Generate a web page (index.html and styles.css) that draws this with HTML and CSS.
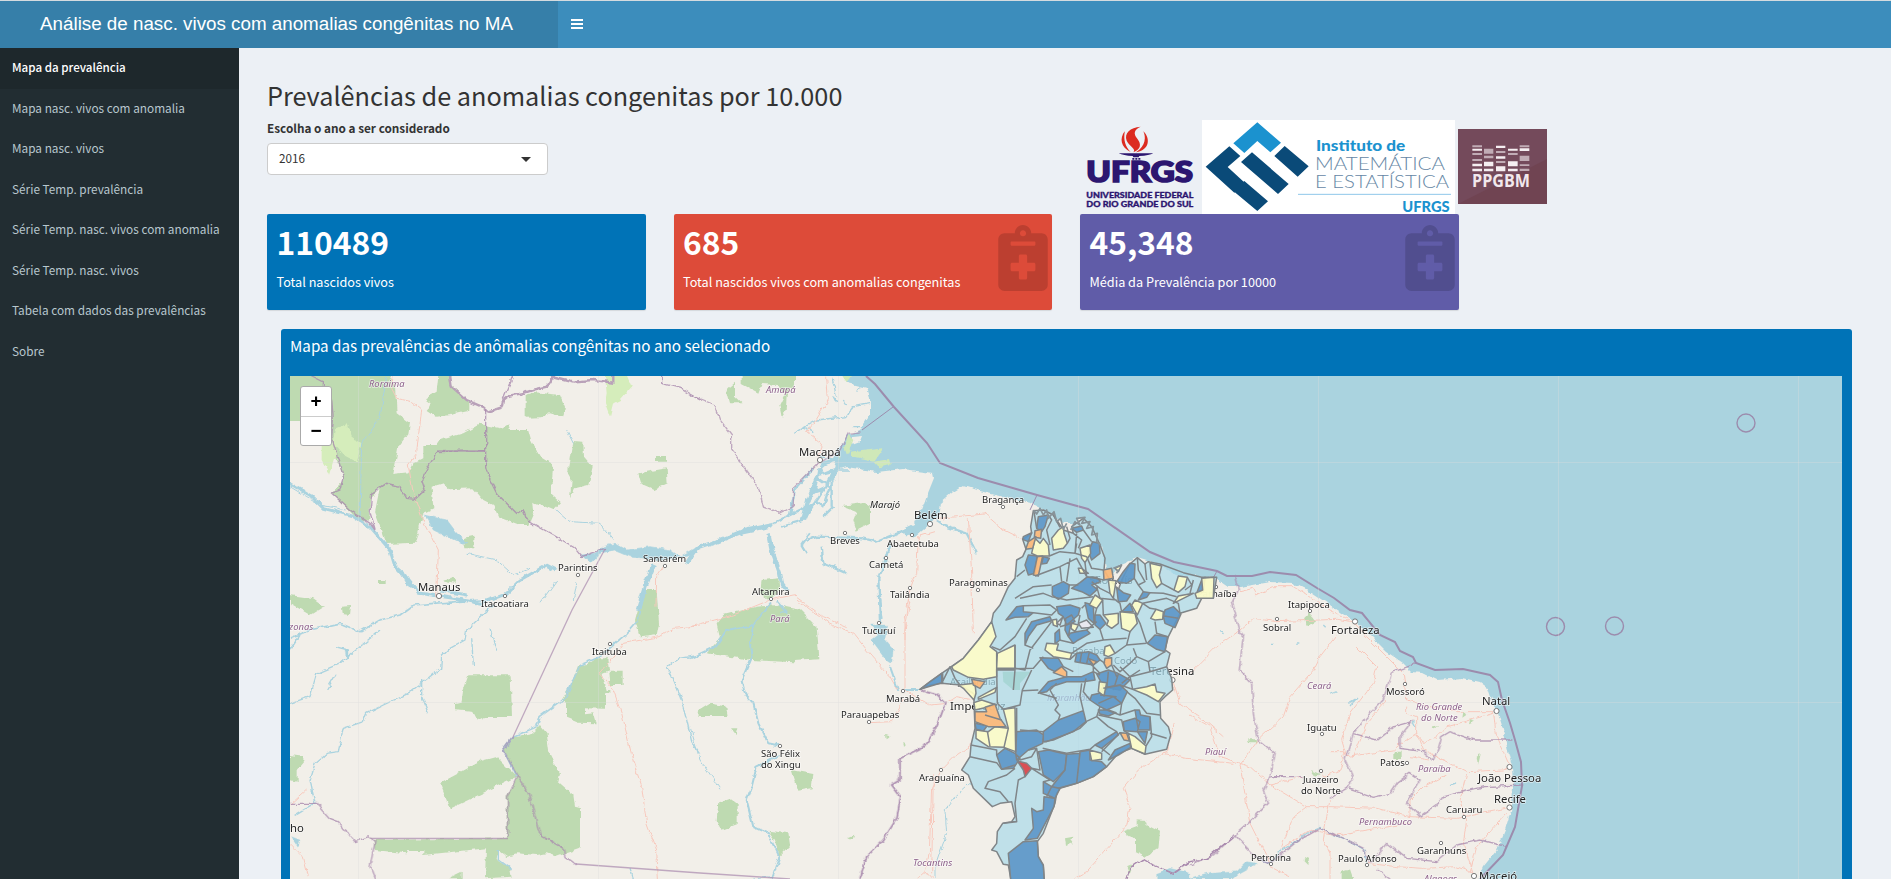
FILE: index.html
```html
<!DOCTYPE html>
<html lang="pt-BR">
<head>
<meta charset="utf-8">
<title>Análise de nasc. vivos com anomalias congênitas no MA</title>
<link rel="stylesheet" href="styles.css">
</head>
<body>
<header class="topbar">
  <div class="brand">Análise de nasc. vivos com anomalias congênitas no MA</div>
  <div class="toggle"><i></i><i></i><i></i></div>
</header>
<div class="shell">
  <nav class="sidebar">
    <a class="active">Mapa da prevalência</a>
    <a>Mapa nasc. vivos com anomalia</a>
    <a>Mapa nasc. vivos</a>
    <a>Série Temp. prevalência</a>
    <a>Série Temp. nasc. vivos com anomalia</a>
    <a>Série Temp. nasc. vivos</a>
    <a>Tabela com dados das prevalências</a>
    <a>Sobre</a>
  </nav>
  <main class="content">
    <h2>Prevalências de anomalias congenitas por 10.000</h2>
    <div class="grid controls">
      <div class="field">
        <label>Escolha o ano a ser considerado</label>
        <div class="select"><span>2016</span><b class="caret"></b></div>
      </div>
      <div></div>
      <div class="logos">
        <svg width="118" height="94" viewBox="0 0 354 282">
          <g fill="#dc2b20"><path d="M182 20C150 22 132 40 140 62C148 80 170 86 160 97C184 86 184 72 172 56C158 40 164 28 182 20Z"/><path d="M134 34C118 56 122 82 152 96C136 80 130 60 134 36Z"/><path d="M190 34C198 50 198 78 168 97C212 90 210 52 190 34Z"/></g>
          <path d="M116 100H220Q208 107 178 108L176 112H160L158 108Q130 107 116 100ZM157 114h6v5h-6zM166 114h6v5h-6zM175 114h6v5h-6z" fill="#2c1670"/>
          <g fill="#2c1670" stroke="#2c1670" class="ufrgs"><text x="19" y="186" font-size="84" stroke-width="5" textLength="320" lengthAdjust="spacingAndGlyphs">UFRGS</text><text x="19" y="235" font-size="25" stroke-width="1" textLength="321" lengthAdjust="spacingAndGlyphs">UNIVERSIDADE FEDERAL</text><text x="19" y="261" font-size="25" stroke-width="1" textLength="321" lengthAdjust="spacingAndGlyphs">DO RIO GRANDE DO SUL</text></g>
        </svg>
        <svg width="253" height="94" viewBox="0 0 759 282">
          <path fill="#fff" d="M0 0h759v282H0z"/>
          <path fill="#1b92cf" d="M166 7L237 68L205 97L166 63L127 99L94 70Z"/>
          <path fill="#0a4a78" d="M82 79L115 108L77 141L129 189L97 218L11 140ZM150 97L260 192L228 222L117 126ZM248 78L320 139L287 170L217 108ZM127 183L198 244L166 273L94 213Z"/>
          <g class="ime"><text class="heavy" x="342" y="92" font-size="46" textLength="268" lengthAdjust="spacingAndGlyphs">Instituto de</text><text x="339" y="149" font-size="55" textLength="390" lengthAdjust="spacingAndGlyphs">MATEMÁTICA</text><text x="339" y="204" font-size="55" textLength="402" lengthAdjust="spacingAndGlyphs">E ESTATÍSTICA</text><text class="heavy" x="601" y="275" font-size="47" textLength="142" lengthAdjust="spacingAndGlyphs">UFRGS</text></g>
          <path d="M288 223H747" stroke="#8ec7ea" stroke-width="3"/>
        </svg>
        <svg class="ppgbm" width="89" height="75" viewBox="0 0 267 225">
          <path fill="#744a5b" d="M0 0h267v225H0z"/><path fill="#704452" d="M0 225L267 90v135z"/>
          <g fill="#f5eef1"><path d="M43 59h29v6H43zM43 104h29v8H43zM43 119h29v8H43zM78 98h28v14H78zM78 119h28v8H78zM114 50h28v7h-28zM114 82h28v7h-28zM114 112h28v15h-28zM150 59h29v6h-29zM150 97h29v15h-29zM150 119h29v8h-29zM185 58h29v8h-29z"/><path opacity=".6" d="M43 49h29v6H43zM43 72h29v6H43zM43 90h29v6H43zM78 59h28v15H78zM78 80h28v8H78zM114 66h28v6h-28zM114 96h28v6h-28zM150 72h29v6h-29zM185 49h29v6h-29zM185 80h29v16h-29zM185 106h29v5h-29zM185 119h29v7h-29z"/></g>
          <text x="42" y="174" textLength="174" lengthAdjust="spacingAndGlyphs">PPGBM</text>
        </svg>
      </div>
    </div>
    <div class="grid">
      <section class="tile blue"><strong>110489</strong><p>Total nascidos vivos</p></section>
      <section class="tile red"><strong>685</strong><p>Total nascidos vivos com anomalias congenitas</p>
        <svg class="clip" viewBox="0 0 384 512"><path d="M336 64h-80c0-35-29-64-64-64s-64 29-64 64H48C22 64 0 86 0 112v352c0 26 22 48 48 48h288c27 0 48-22 48-48V112c0-26-21-48-48-48zM192 40c13 0 24 11 24 24s-11 24-24 24-24-11-24-24 11-24 24-24zm96 307c0 7-5 12-12 12h-52v52c0 7-5 12-12 12h-40c-7 0-12-5-12-12v-52h-52c-7 0-12-5-12-12v-42c0-7 5-12 12-12h52v-52c0-7 5-12 12-12h40c7 0 12 5 12 12v52h52c7 0 12 5 12 12zm0-193c0 3-3 6-6 6H102c-3 0-6-3-6-6v-20c0-3 3-6 6-6h180c3 0 6 3 6 6z"/></svg></section>
      <section class="tile purple"><strong>45,348</strong><p>Média da Prevalência por 10000</p>
        <svg class="clip" viewBox="0 0 384 512"><path d="M336 64h-80c0-35-29-64-64-64s-64 29-64 64H48C22 64 0 86 0 112v352c0 26 22 48 48 48h288c27 0 48-22 48-48V112c0-26-21-48-48-48zM192 40c13 0 24 11 24 24s-11 24-24 24-24-11-24-24 11-24 24-24zm96 307c0 7-5 12-12 12h-52v52c0 7-5 12-12 12h-40c-7 0-12-5-12-12v-52h-52c-7 0-12-5-12-12v-42c0-7 5-12 12-12h52v-52c0-7 5-12 12-12h40c7 0 12 5 12 12v52h52c7 0 12 5 12 12zm0-193c0 3-3 6-6 6H102c-3 0-6-3-6-6v-20c0-3 3-6 6-6h180c3 0 6 3 6 6z"/></svg></section>
    </div>
    <section class="mapbox">
      <h3>Mapa das prevalências de anômalias congênitas no ano selecionado</h3>
      <div class="map">
        <svg class="tiles" width="1552" height="503" viewBox="290 376 1552 503">
          <defs><filter id="rough" filterUnits="userSpaceOnUse" x="270" y="360" width="1600" height="540"><feTurbulence type="fractalNoise" baseFrequency=".13" numOctaves="3" seed="4"/><feDisplacementMap in="SourceGraphic" scale="5" xChannelSelector="R" yChannelSelector="G"/></filter></defs>
          <path fill="#aad3df" d="M290 376H1842V879H290z"/>
          <g filter="url(#rough)">
            <path fill="#f2efe9" d="M280 366H842L847 383L867 388L870 397L870 415L860 430L847 435L840 448L834 457L822 462L806 500L801 520L806 521L813 505L832 480L837 470L847 467L877 472L903 469L933 473L934 478L928 493L923 507L917 523L905 533L915 537L938 517L940 503L953 492L963 486L980 491L1003 497L1030 503L1050 513L1063 523L1073 523L1083 518L1092 527L1100 543L1105 562L1108 580L1120 565L1137 558L1160 565L1177 575L1215 578L1228 587L1240 587L1270 582L1293 583L1307 590L1333 607L1353 620L1372 637L1387 652L1403 663L1412 672L1423 673L1437 680L1463 678L1480 682L1488 688L1492 700L1497 710L1503 730L1507 747L1512 767L1513 787L1512 807L1505 830L1497 850L1483 867L1473 889H280z"/>
            <path fill="#f2efe9" d="M821 466L836 462L834 468L824 472zM818 476L831 473L826 485L815 490zM813 494L822 491L815 502L809 506zM852 437L862 436L860 441L852 444z"/>
            <g fill="#bedab1">
              <g transform="translate(280,320) scale(.33333)">
                <path d="M20 150H320L345 200L350 280L390 310L385 340L355 380L340 465L385 460L400 430L430 415L430 375L470 375L480 360L550 340L600 312L660 325L685 310L690 330L745 330L755 365L780 410L820 435L812 525L840 550L820 570L760 545L762 575L745 615L720 615L655 590L640 555L610 540L580 505L510 508L490 490L455 500L460 565L430 580L420 615L405 668L320 672L285 575L300 500L270 540L268 600L240 605L200 565L155 520L190 480L180 440L160 400L150 300L30 300z"/>
                <path d="M475 165H515L510 190L568 245V272L510 285L470 290L440 270L455 250L435 235L470 215zM737 225L765 217L840 225L855 260L850 292L810 280L783 292L737 293zM880 366L910 368L912 410L938 440L925 495L885 505L870 535L875 480L858 450L868 440zM1128 405h30v20h-30zM1075 460L1160 445L1163 490L1120 510L1085 495zM548 655l35-8v38h-30zM297 780h20v12h-20zM485 780L520 772L528 790zM30 825L100 835L135 860H60L30 850z"/>
                <path fill="#d5edbb" d="M975 165H1040L1055 200L1020 240L1000 250L990 290L975 250L980 220zM170 320L200 310L215 350L245 370L230 425L190 405L160 370zM125 375L160 370L170 400L150 465L125 420z"/>
              </g>
              <g transform="translate(280,590) scale(.33333)">
                <path d="M565 256H692L696 381H612L590 392L575 362L525 358V340L545 335L550 300zM895 225L925 222L950 205H985L990 240L965 250L980 300H988V310H975V356L915 355L915 370L940 367L950 400L895 398L858 383V335L845 330L870 290zM985 245h43v40h-40zM1090 0H1130L1137 100L1130 135L1080 142L1065 90zM700 440L755 430L780 405L800 430L808 490L840 555L835 575L880 615L885 650L903 655V775L830 800L800 790L770 795L710 790L680 798L655 780L650 810L690 835L695 860L615 865L618 775L430 795V780L385 780L380 790L285 780L280 750L680 745V620L710 560L670 480zM480 580L605 512L650 500L710 560L510 656zM30 495L70 500L70 515L50 540V575L30 570zM30 20L80 30L130 50L90 75L30 40zM183 50L213 48L210 75L185 72zM505 865L545 845V865z"/>
              </g>
              <g transform="translate(690,360) scale(.33333)">
                <path d="M155 45H315V80L295 85L290 150L275 172L268 135L285 100L265 75L215 72L205 98L155 72zM115 85L135 68L135 110L155 130H118L110 100zM455 438L515 430L543 440V490L500 512L490 480L500 455zM215 660L265 655L268 690L240 720L210 700z"/>
                <path d="M80 790L100 765L200 740L260 735L330 750L380 800L388 895L312 900V907L185 900L50 880L90 835z" />
                <path fill="#cfe8b8" d="M475 225L490 240L475 280L445 300L460 270zM480 275L580 262L550 305L480 290zM550 305L600 297L605 315L565 322zM455 45h30l-15 22z"/>
              </g>
              <g transform="translate(690,600) scale(.33333)">
                <path d="M25 330L60 308L105 315L110 348H22zM305 510L370 522L365 565L325 572zM85 610L120 598L143 615V672L95 690L80 660zM235 692L295 700L300 735L268 768L255 720zM120 385h22l-5 20zM640 425l10 8-8 8zM585 405l14 5-12 8zM475 712l18-8-5 14z"/>
              </g>
              <g transform="translate(900,660) scale(.33333)"><path d="M670 515L710 500V478L735 480L740 495L780 515L775 565L735 590L705 575V540zM495 535L520 530L515 550L498 558zM680 620l20-8-12 30z"/></g>
              <g transform="translate(1190,540) scale(.33333)"><path d="M345 235L360 220L378 245L350 258zM175 598h27v9h-27zM610 635h25v22h-25zM340 960l17-10-2 25zM455 995L480 988L490 1017H455zM360 690l30 12-15 8zM860 650l12-8-8 35zM820 515l12 8-15 10zM840 540l15 5-18 8zM720 560l30-5-20 10z"/></g>
            </g>
            <g fill="none" stroke="#aad3df" stroke-linejoin="round">
              <g transform="translate(280,320) scale(.33333)">
                <path stroke-width="9" d="M20 485L95 530L130 565L225 590L270 620L330 690L345 740L420 820L520 835L600 850L680 820L720 780L800 735L830 750M480 810L560 825"/>
                <path stroke-width="3" d="M30 500L120 555L200 570M320 170L300 290L245 370L240 600M560 700L650 720L700 765L750 745M860 330L880 370M830 570L870 605L960 610L1000 660M780 850L830 780M890 790L880 840"/>
                <path fill="#aad3df" stroke-width="2" d="M430 585L500 600L530 640L560 665L545 670L460 630L445 600zM345 735L375 760L415 815L380 795zM905 705L945 700L970 680L1005 670L1040 690L1110 680L1170 690L1200 710L1260 675L1250 700L1150 720L1060 715L1000 690L960 700L930 730z"/>
                <path stroke-width="15" d="M1120 735L1095 800L1075 870"/>
              </g>
              <g transform="translate(280,590) scale(.33333)">
                <path stroke-width="5" d="M30 145L90 120L180 100L240 125L300 90L360 75L400 45L460 40L600 30M30 180L60 135M1095 0L1075 90L1040 130L1000 165L950 205L900 225L855 325L780 380L770 410L700 440L670 480L710 560"/>
                <path stroke-width="4" d="M640 45L560 120L555 150L510 175L485 200L482 235L430 275L385 310L310 345L260 370L250 395L190 415L175 485L140 490L105 520L90 570L105 640L40 680M30 340L90 320L110 250L180 220L240 170L300 120M425 270L425 320L445 370M575 145L580 225M630 115L650 185M1260 195L1200 205L1160 230L1200 320L1220 390L1235 455L1260 490M655 780L655 810L695 840M165 170L205 180L200 210M170 250L140 300M1060 865L1050 835"/>
                <path fill="#aad3df" d="M35 740L60 750L55 770zM195 180h12v25h-8z"/>
              </g>
              <g transform="translate(690,360) scale(.33333)">
                <path stroke-width="13" d="M-10 610L20 565L80 545L155 515L250 495M235 520L245 570L270 640L275 670L290 690"/>
                <path stroke-width="7" d="M250 490L290 470L350 440L375 390L385 330L425 295M270 500L340 480L380 420L430 340M300 465L315 390L370 325M425 440V370L450 300M375 420L400 440L420 380L375 350M350 545L380 530L520 535L560 545L620 520L690 490M600 550L580 620L565 650L570 790M740 480L770 500L830 520L860 580M430 440L400 470M350 580L335 555L360 520M395 560L400 610L470 640"/>
                <path stroke-width="22" d="M450 260L465 300M700 450L680 500L640 520"/>
                <path stroke-width="4" d="M425 50L440 110M310 220L380 180L470 170L490 140L540 130M340 200L370 215M520 200H490M420 330H480M390 290L440 300M430 110L440 130M460 120L470 135M500 95L510 80"/>
              </g>
              <g transform="translate(690,600) scale(.33333)">
                <path stroke-width="6" d="M0 175L75 140L110 90L190 75L240 10M190 75L180 130L185 170L155 240L165 280L190 310L205 370L235 430L270 437M270 465L200 500L185 560L170 600L190 680L235 700L268 770L245 837M260 0L290 35L270 40M568 0L575 60M600 200L625 270M640 270L690 270"/>
                <path stroke-width="3" d="M0 380L30 480L90 565M840 550L795 590L765 630L770 700L735 800V837M190 837L245 830"/>
                <path fill="#aad3df" d="M545 75L590 75L585 120L610 150L605 190L590 180L560 140L545 120L565 105z"/>
              </g>
              <g transform="translate(1190,540) scale(.33333)"><path stroke-width="4" d="M200 955L240 970L275 930L320 905L350 880L390 862L420 880L470 900L525 930L530 970M475 490L500 475L480 498M420 460L440 452M240 310h12M320 312h8M780 735l18-6M670 545l10 20M90 275l14 6M400 255l10 10"/><path fill="#aad3df" d="M0 1017L60 1000L140 995L170 965L205 970L150 1000L130 1017zM-100 1000L-60 985L0 1000V1025H-100z"/></g>
            </g>
            <g fill="none" stroke="#f8c9bd" stroke-width="3">
              <g transform="translate(280,320) scale(.33333)"><path d="M340 165L335 205L350 235L395 245L425 270L415 350L410 400L385 435L400 520L425 590L460 660L475 690L470 830M1150 740L1130 770L1128 860"/></g>
              <g transform="translate(280,590) scale(.33333)"><path d="M1260 108L1180 115L1140 140L1030 160L990 215L960 250L1000 300L1025 370L1060 515L1085 590L1100 700L1130 780L1135 867M30 645L80 600M30 760L70 800L85 860"/></g>
              <g transform="translate(690,360) scale(.33333)"><path d="M410 50L415 120L375 185L350 215L395 250L385 290M745 475L800 470L885 462L940 510L1000 540M835 475L845 640L850 820M735 515L685 530L680 640L660 690L645 780V840M0 800L130 765L240 720L310 705L400 770L470 800"/></g>
              <g transform="translate(690,600) scale(.33333)"><path d="M320 0L420 70L490 100L530 150L600 230L620 265M660 0L645 90V270L720 315L770 310L800 290L850 300M640 300L605 365L540 368M850 430L800 465L755 510L725 560L718 760L705 815M705 810L730 837M705 815L680 837"/></g>
              <g transform="translate(900,660) scale(.33333)"><path d="M820 65L840 130L900 170L970 230M820 190L800 275L715 330L670 385L690 440L680 500L560 635L520 657M790 280L860 295L1000 310M100 340L95 640"/></g>
              <g transform="translate(1190,540) scale(.33333)"><path d="M0 400L80 320L150 270L190 235L260 245L440 238L490 245L530 290L590 350L640 400L650 480L720 500L800 515L910 515L920 590L960 680M150 155L190 145L200 165L250 140H310L420 210L480 240M440 285L390 350L370 390L300 470L280 530L205 600L150 675L180 850L240 970M0 525L60 560L90 650L180 680L240 735L350 800L420 800L560 805L660 830L800 835L950 805M500 320L560 380L550 430L480 520L455 600L470 650L610 630L640 605L680 580L700 610L740 590L770 560L910 520M420 635H465L450 690L400 710L395 690M240 735L340 710M650 500V520L680 530V580L700 630L830 695L940 690L960 680M830 700L810 780L830 840L820 910L850 1000M660 830V780L700 740L770 705M350 800L310 830L275 920M420 780L410 830L400 900L420 940V1017M950 820L860 920L840 1000M275 925L360 870L440 885L530 870L660 850M660 650L720 660M530 970L620 980L700 985L800 980L850 1000M590 480L530 550L490 650M240 980L300 1010"/></g>
            </g>
          </g>
          <g fill="none" stroke="#a98aae" filter="url(#rough)">
            <g transform="translate(280,320) scale(.33333)"><path stroke="#b9a1b9" stroke-width="7" d="M510 165L515 200L560 240L610 262L625 275L665 262L670 240L685 228L735 218L765 208L800 200L820 170L880 185L940 180L1000 188V165M617 265"/><path stroke-width="4" opacity=".8" d="M90 165L130 185V210L155 240L160 300L155 350L190 470L180 510L155 520L210 570L270 610L285 630L270 580L275 520L320 490L360 500L380 535L405 538L435 510L425 480L470 395L615 392M617 265V440L625 470L650 520L710 580L730 570L740 600L820 645L880 680L905 710L945 695L975 685M700 165L670 235M1145 165V190L1200 205L1260 240"/></g>
            <g transform="translate(280,590) scale(.33333)"><path stroke-width="4" opacity=".8" d="M700 440L670 480L710 555L745 610L780 735L850 775L855 800L890 825M710 560L683 620V740M30 640H110L150 685L175 695L225 755L265 740L285 755L270 830L285 867"/></g>
            <g transform="translate(690,360) scale(.33333)"><path stroke-width="4" opacity=".7" d="M0 105L75 135L90 180L125 225V270L180 345L205 380L220 440L270 460L310 440L310 385L380 315L450 270L475 220L515 215"/></g>
            <g transform="translate(690,600) scale(.33333)"><path stroke-width="5" d="M690 270L740 285L765 310L745 365L730 400L700 440L630 475V540L605 555L632 590L620 655L580 720L530 770L510 837"/></g>
            <g transform="translate(900,660) scale(.33333)"><path stroke-width="4" d="M680 657L690 625L730 598L760 615L820 640L870 605L920 595L1000 530"/></g>
            <g transform="translate(1190,540) scale(.33333)"><path stroke-width="4" opacity=".8" d="M135 110L145 150L125 190L148 275L160 290L148 390L185 430L190 520L205 600L255 640L240 710L340 710M240 710L220 750L235 790L175 850L135 885L70 945L0 975M680 370L605 398L580 480L540 520L490 580L465 660L490 715L470 745L420 775M490 580L560 600L610 560L665 545L630 590V625L700 635L730 660L745 625L755 590L780 575L850 600L970 600M470 745L550 772L600 760L620 730L660 700L690 720L650 790L690 830L740 795L760 770L880 740L1000 735M135 885L200 955L240 970L320 905L390 865L470 900L520 925L540 970L590 910L650 955L740 965L800 915L870 900L950 920M560 990L600 1017"/></g>
          </g>
          <g fill="none" stroke="#9c8cad">
            <path stroke-width="2" d="M866 376L875 384L894 407L927 443L940 463L978 478L1037 495L1088 509L1150 552L1174 562L1217 571L1227 576L1252 576L1270 572L1296 575L1317 588L1334 598L1350 610L1362 613L1380 635L1395 642L1400 651L1413 657L1416 663L1435 670L1463 669L1490 675L1498 682L1502 700L1510 723L1515 740L1521 762L1522 786L1515 827L1503 855L1480 879"/>
            <path d="M893 407L862 430M1037 495L1030 510M1217 571L1211 582"/>
            <path opacity=".7" stroke="#a98aae" stroke-width="1.300" d="M605 549L572 610L513 737M576 864L700 873L790 879M371 838.500H508M437 451H485"/>
            <g stroke-width="1.400"><circle cx="1555.500" cy="626.500" r="9"/><circle cx="1614.500" cy="626" r="9"/><circle cx="1746" cy="423" r="9"/></g>
          </g>
          <path stroke="#ddd" stroke-opacity=".35" d="M358.500 376V879M598.500 376V879M838.500 376V879M1078.500 376V879M1318.500 376V879M1558.500 376V879M1798.500 376V879M290 462.500H1842M290 702.500H1842"/>
          <g class="lbl big">
            <text x="418" y="591">Manaus</text><text x="799" y="456">Macapá</text><text x="914" y="519">Belém</text><text x="1150" y="675">Teresina</text><text x="1089" y="584">São Luís</text><text x="950" y="710">Imperatriz</text><text x="1331" y="634">Fortaleza</text><text x="1482" y="705">Natal</text><text x="1478" y="782">João Pessoa</text><text x="1494" y="803">Recife</text><text x="1479" y="880">Maceió</text><text x="290" y="832">ho</text>
          </g>
          <g class="lbl">
            <text x="558" y="571">Parintins</text><text x="643" y="562">Santarém</text><text x="481" y="607">Itacoatiara</text><text x="592" y="655">Itaituba</text><text x="830" y="544">Breves</text><text x="887" y="547">Abaetetuba</text><text x="869" y="568">Cametá</text><text x="890" y="598">Tailândia</text><text x="949" y="586">Paragominas</text><text x="982" y="503">Bragança</text><text x="752" y="595">Altamira</text><text x="862" y="634">Tucuruí</text><text x="886" y="702">Marabá</text><text x="841" y="718">Parauapebas</text><text x="761" y="757">São Félix</text><text x="761" y="768">do Xingu</text><text x="919" y="781">Araguaína</text><text x="950" y="685">Açailândia</text><text x="1072" y="654">Bacabal</text><text x="1114" y="664">Codó</text><text x="1197" y="597">Parnaíba</text><text x="1288" y="608">Itapipoca</text><text x="1263" y="631">Sobral</text><text x="1386" y="695">Mossoró</text><text x="1307" y="731">Iguatu</text><text x="1380" y="766">Patos</text><text x="1303" y="783">Juazeiro</text><text x="1301" y="794">do Norte</text><text x="1446" y="813">Caruaru</text><text x="1417" y="854">Garanhuns</text><text x="1251" y="861">Petrolina</text><text x="1338" y="862">Paulo Afonso</text><text x="870" y="508" font-style="italic">Marajó</text>
          </g>
          <g class="lbl state">
            <text x="369" y="387">Roraima</text><text x="766" y="393">Amapá</text><text x="770" y="622">Pará</text><text x="289" y="630">zonas</text><text x="913" y="866">Tocantins</text><text x="1047" y="701">Maranhão</text><text x="1205" y="755">Piauí</text><text x="1307" y="689">Ceará</text><text x="1416" y="710">Rio Grande</text><text x="1421" y="721">do Norte</text><text x="1418" y="772">Paraíba</text><text x="1359" y="825">Pernambuco</text><text x="1424" y="882">Alagoas</text>
          </g>
          <g fill="#fff" stroke="#777">
            <circle cx="439" cy="596" r="2.600"/><circle cx="820" cy="460" r="2.600"/><circle cx="930" cy="524" r="2.600"/><circle cx="1172.500" cy="680" r="2.600"/><circle cx="1355" cy="621.500" r="2.600"/><circle cx="1496.500" cy="711" r="2.600"/><circle cx="1509.500" cy="767" r="2.600"/><circle cx="1509.500" cy="807.500" r="2.600"/><circle cx="1474" cy="876" r="2.600"/>
            <circle cx="578" cy="575" r="1.700"/><circle cx="665" cy="566" r="1.700"/><circle cx="505" cy="596" r="1.700"/><circle cx="610" cy="644" r="1.700"/><circle cx="845" cy="533" r="1.700"/><circle cx="912" cy="535" r="1.700"/><circle cx="886" cy="558" r="1.700"/><circle cx="910" cy="588" r="1.700"/><circle cx="978" cy="590" r="1.700"/><circle cx="1003" cy="507" r="1.700"/><circle cx="771" cy="599" r="1.700"/><circle cx="879" cy="623" r="1.700"/><circle cx="903" cy="691" r="1.700"/><circle cx="869" cy="722" r="1.700"/><circle cx="780" cy="746" r="1.700"/><circle cx="941" cy="770" r="1.700"/><circle cx="1216" cy="587" r="1.700"/><circle cx="1310" cy="611" r="1.700"/><circle cx="1277" cy="619" r="1.700"/><circle cx="1405" cy="684" r="1.700"/><circle cx="1322" cy="734" r="1.700"/><circle cx="1407" cy="763" r="1.700"/><circle cx="1321" cy="771" r="1.700"/><circle cx="1464" cy="817" r="1.700"/><circle cx="1441" cy="843" r="1.700"/><circle cx="1271" cy="864" r="1.700"/><circle cx="1367" cy="865" r="1.700"/><circle cx="972" cy="674" r="1.700"/>
          </g>
          <!-- municípios do Maranhão -->
          <g class="cells" stroke="#808588" stroke-width="4.500" stroke-linejoin="round">
            <g transform="translate(900,490) scale(.33333)">
              <path class="c1" d="M400 62L392 110L395 130L368 148L378 178L368 200L350 210L345 265L325 290L300 345L280 370L275 395L235 450L190 505L125 550L60 598L90 585L125 580L180 585L222 612V640L225 715L213 765L210 800L185 840L205 855L220 895L277 950L300 940L335 935L345 980L335 995L308 1000L292 1025L290 1060L275 1080L290 1085L310 1123L325 1125L333 1170H433L430 1130L415 1100L412 1055L430 1030L465 940L470 910L480 895L530 880L580 860L620 830L655 790L695 775L735 793L800 778L812 735L805 710L782 685L780 635L795 620L818 600L815 565L800 530L810 490L795 480L805 440L840 370L890 355L905 325H940L950 262L905 262L850 248L780 222L745 215L735 222L712 203L690 222L665 270L655 300L630 270L612 240L615 205L600 165L575 110L550 85L515 110L520 130L490 120L460 75L430 60z"/>
              <g class="c2"><path d="M415 80L445 75L435 110L425 125L410 115zM370 140L395 128L385 155L368 148zM385 195L412 198L405 250L385 255L375 225zM430 200L448 205L440 220L425 222zM565 185L578 155L598 160L600 190L575 210zM515 115L545 108L550 120L530 127zM457 290L490 275L508 285L505 310L475 328L457 315zM515 295L540 278L560 262L590 262L602 275L575 285L592 298L570 318L545 305zM670 245L690 220L705 222L703 265L680 280L650 275zM650 292L670 308L692 315L680 333L655 335zM715 330L730 305L750 308L740 322z"/><path d="M318 390L350 350L370 347V365L400 368L385 380L345 382zM375 465V430L395 395L450 380L455 392L410 405L385 440zM470 350L510 345L540 355L535 375L500 405L490 380L475 370zM555 338L580 345L582 400L565 385zM465 430L478 418L480 450L465 462zM497 385L515 375L525 395L513 400L505 440L495 420zM510 430L530 425L560 420L570 430L535 450L520 460L505 440zM585 375H600L618 400L600 418L585 405zM665 365L690 340L700 365zM795 360L820 350L843 372L825 413L795 400L790 380zM742 460L765 435L803 440L795 485L770 478zM420 503L475 505L490 530L465 545L445 535zM530 490L565 485L590 495L600 510L580 525L525 515zM590 552L625 540L650 548L690 570L660 600L610 590zM890 310L905 270L915 262L910 305zM60 598L90 575L125 550V578z"/></g>
              <g class="c3"><path d="M455 145L475 120L490 110L492 130L502 160L490 175L460 180zM395 190L405 145L420 160L430 145L445 165L448 198L412 198zM540 175L570 165L572 190L555 218L545 205zM535 235L545 235L565 250L540 250zM625 270L648 272L640 325L630 310zM585 315L608 330L590 355L568 345zM695 345L705 330L728 340L712 375zM610 375L655 370V400L635 415L620 405L625 392zM660 365L705 370L712 400L690 425L665 415zM750 220L785 228L778 255L785 280L770 293L755 265zM835 258L862 262L855 290L835 307L822 300zM820 340L835 318L880 310L850 325zM905 265L942 262L940 325H890L885 310L908 300zM752 385L768 358L790 365L788 388L765 390z"/><path d="M155 530L190 505L235 450L275 395L288 440L270 470L290 485V560L250 568L205 562L160 540zM292 490L345 465V535H290zM435 480L440 460L475 462L470 480L515 490L510 508L460 500zM515 400L535 405L525 425L513 415zM615 470L630 465L645 490L625 500L612 495zM457 390L470 388L472 410L460 405zM645 235L665 225L655 245z"/></g>
              <path class="c4" d="M405 122L425 118L422 145L403 142zM385 155L408 140L398 175L377 178zM412 200L428 198L415 258L400 255zM610 240L635 235L640 265L612 270zM460 548L485 530L500 545V563zM615 505L635 503V525L620 535L612 520zM565 505L590 515L580 525z"/>
              <path fill="#ece9ee" d="M535 400L560 390L580 412L545 415zM470 400L488 382L480 405z"/>
              <path fill="#a5d5d3" stroke="none" d="M308 545H392L360 580V600H340L310 575z"/>
              <path fill="none" d="M402 65L410 115M445 75L455 90L440 120L450 165M460 75L480 112M500 110L510 145L502 160M520 130L545 150L535 175M550 120L575 155M448 198L480 185L525 190L530 160M375 240L350 260M405 258L480 230L530 205L560 260M345 325L400 290L455 285M360 325L430 310L455 320L500 330L580 320M370 347L450 345L470 360L455 375L400 368M275 470L300 480L345 440L380 385M345 465V540H290M345 535L375 540L390 480L455 395M375 465L400 475M290 538L400 535L430 500M480 230L485 275M510 205L500 275M525 190L560 200L575 235L610 240M560 260L612 270M575 275L600 295L630 310M508 285L535 285M590 290L600 325L650 330M608 330L610 375M590 355L585 375M640 325L660 340L665 365M703 265L715 285L730 305M712 203L715 240L735 275L715 285M735 222L740 270M750 308L790 310L830 320M785 280L822 300M862 262L875 285L855 300M880 270L870 310M728 340L750 355L768 358M728 340L800 325L835 340L840 370M792 378L835 385M705 370L720 400L740 460M765 395L770 430L803 440M690 425L680 465L645 490M680 465L740 460M600 418L610 450L560 460L515 490M560 420L590 395M480 410L515 400M478 450L520 460M545 355L555 345M540 375L535 400M610 450L680 445M700 475L710 500L745 515L795 485M710 500L690 520L660 545L640 525M745 515L750 545L690 560L665 580M750 545L800 530M510 508L530 490M490 530L520 545M600 510L615 520M580 525V545M635 525L650 560M570 520L600 550M545 487L540 518M568 487L560 520M625 545L620 600M655 552L640 600M125 580L150 530L165 565L180 585M128 550V580M345 540L340 600M530 130L525 190M555 218L560 260"/>
              <path fill="none" stroke-width="5" stroke="#879399" d="M400 60L410 72L420 55L430 75L440 60L445 85L462 65L470 95L482 85L490 118L500 100M512 120L525 95L540 105L530 85L555 82L545 100L570 95L560 115L580 110L575 135L592 130L590 155L602 165M640 235L665 225M650 250L655 238"/>
            </g>
            <g transform="translate(900,660) scale(.33333)">
              <g class="c2"><path d="M415 100L445 65L500 50L545 50L580 35L585 60L550 65L500 65L455 80L440 95zM605 85L640 78L660 75L682 95L665 130L620 150L600 140L570 120L575 105L598 100zM595 150L625 150L648 158L625 168L600 162zM430 215L475 180L550 152L558 185L520 215L440 245L430 245zM350 215L410 210L430 225L428 250L385 270L350 300L347 280zM290 285L315 265L345 280L360 295L340 325L305 328zM415 275L445 270L500 283L495 330L460 365L430 345z"/><path d="M500 283L540 280L530 370L475 385L455 380L495 330zM540 275L570 270V300L605 305L620 320L580 350L530 370zM585 255L650 215L655 225L605 265zM625 300L645 270L690 250L692 262L655 285zM670 185L705 175L720 185L712 215L672 212zM705 150L718 150L722 165L750 170V210L715 210zM712 215H742L735 250zM432 410L465 415L462 440L412 535L375 540L400 505L395 445L410 455L430 450zM430 365L455 380L480 385L465 415L430 400zM325 580L370 545L412 542L415 590L430 615L433 670H333zM225 190L262 197L250 213L228 208z"/></g>
              <path class="c3" d="M175 75L225 70L228 100L222 120L190 85zM235 112L290 82L285 97L235 118zM222 128L245 120L290 135L225 150zM310 148L345 143L347 275L312 262L325 205zM228 210L265 215L285 200L325 205L312 262L265 260L228 235zM598 65L620 68L612 108L595 95zM698 88L740 80L765 72L770 95L795 100L775 125L740 105zM568 270L605 280V298L575 302zM685 220L705 230L738 258L735 282L695 265z"/>
              <path class="c4" d="M215 58L255 65L240 85L220 75zM225 155L260 155L255 142L285 132L300 175L318 200L265 200L225 185zM660 218L680 220L688 243L672 240z"/>
              <path class="c5" d="M352 303L380 310L395 325L375 350L370 330z"/>
              <path fill="none" d="M290 28L292 130L310 148L360 135L367 90L395 30M350 143V215M367 92L415 90M420 100L470 115M430 215L360 210M470 70L450 90L475 135L465 150L480 165L475 180M545 70L540 110L550 152M558 185L590 170L600 140M558 55L550 95L570 120M590 170L625 200L650 215M595 165L665 180L672 212M430 245L460 240L540 205L560 185M428 265L500 280L570 268L585 255M605 265L630 285M660 218L605 275M685 220L672 212M665 130L660 165L705 150M680 95L705 115L740 160L780 165M750 170L755 230L738 258M750 220L800 235M213 255L290 270V285M210 290L290 308L305 328L345 315M345 325L320 345L265 365L255 385L300 395L325 425M375 350L355 360L345 430L350 485L335 485M395 325L450 360L430 365M385 270L410 265L395 290L360 300M410 265L420 330L395 325M350 485L310 490M455 380L440 410M580 35L600 45M660 75L698 88L690 50L720 30M690 50L660 20M620 150L660 165M600 105L650 110M610 85L665 75M595 130L640 110L665 130M255 165L305 180M262 213L270 260"/>
            </g>
          </g>
        </svg>
        <div class="zoomctl"><span>+</span><span>−</span></div>
      </div>
    </section>
  </main>
</div>
</body>
</html>
```
FILE: styles.css
```css
* { box-sizing: border-box; }
body { margin: 0; height: 879px; overflow: hidden; background: #ecf0f5; color: #333; font-family: "Noto Sans CJK SC", sans-serif; font-size: 12px; }
.topbar { height: 48px; display: flex; border-top: 1px solid #d4dbdf; background: #3c8dbc; color: #fff; }
.brand { width: 558px; background: #367fa9; font: 18.8px/45px "Liberation Sans", Arial, sans-serif; text-align: center; padding-right: 5px; white-space: nowrap; }
.toggle { padding: 18px 0 0 13px; display: flex; flex-direction: column; gap: 2px; }
.toggle i { width: 12px; height: 2px; background: #fff; }
.shell { display: flex; height: 831px; }
.sidebar { width: 239px; background: #222d32; flex: none; }
.sidebar a { display: block; height: 40.5px; padding-left: 12px; line-height: 38px; font-size: 11.8px; color: #b8c7ce; white-space: nowrap; }
.sidebar .active { background: #1e282c; color: #fff; font-weight: 500; font-size: 11.6px; }
.content { flex: 1; padding: 30px 0 0 28px; overflow: hidden; }
h2 { margin: 0; font-size: 25.25px; font-weight: 400; line-height: 34px; }
.grid { display: grid; grid-template-columns: repeat(3, 378.5px); column-gap: 28px; }
.controls { height: 102px; padding-top: 8px; }
.field label { display: block; font-weight: 700; font-size: 11.75px; line-height: 16px; }
.select { margin-top: 7px; width: 281px; height: 32px; border: 1px solid #ccc; border-radius: 4px; background: #fff; padding: 0 16px 0 11px; display: flex; align-items: center; justify-content: space-between; font-size: 11.7px; line-height: 26px; }
.select span { padding-bottom: 3px; }
.caret { border: 5px solid transparent; border-top-color: #333; border-bottom: 0; }
.logos { display: flex; gap: 4px; width: 480px; }
.logos svg { flex: none; display: block; }
.ppgbm { margin-top: 9px; }
.logos .ppgbm { margin-left: -1px; }
.ppgbm text { font: 700 54px "Open Sans", sans-serif; fill: #f2e8ec; }
.ufrgs { font-family: Lato, sans-serif; font-weight: 900; }
.ime { font-family: Lato, sans-serif; fill: #6687a5; font-weight: 300; }
.heavy { font-weight: 900; fill: #1b92cf; }
.tile { position: relative; height: 96px; padding: 7px 9.5px; border-radius: 2px; color: #fff; box-shadow: 0 1px 1px rgba(0,0,0,.1); }
.tile strong { display: block; font-size: 31.8px; line-height: 40px; font-weight: 700; }
.tile p { margin: 11px 0 0; font-size: 12.68px; line-height: 20px; }
.blue { background: #0073b7; }
.red { background: #dd4b39; }
.purple { background: #605ca8; }
.clip { position: absolute; right: 4px; top: 11px; width: 50px; height: 66px; fill: rgba(0,0,0,.15); }
.mapbox { margin: 19px 0 0 14px; width: 1571px; height: 700px; background: #0073b7; border-radius: 3px; padding: 0 9px; }
h3 { margin: 0; height: 47px; font-size: 15.2px; font-weight: 400; line-height: 33px; color: #fff; }
.map { position: relative; height: 503px; overflow: hidden; }
.tiles { display: block; }
.zoomctl { position: absolute; left: 10px; top: 10px; width: 32px; border: 1px solid #aaa; border-radius: 3px; background: #fff; color: #000; font: 700 19px/28px "Liberation Sans", sans-serif; text-align: center; overflow: hidden; }
.zoomctl span { display: block; height: 29px; }
.zoomctl span + span { border-top: 1px solid #ccc; line-height: 27px; }
.lbl { font-family: "Noto Sans", sans-serif; font-size: 9.5px; fill: #222; stroke: rgba(255,255,255,.6); stroke-width: 1.5px; paint-order: stroke; }
.big { font-size: 11.3px; }
.state { font-style: italic; fill: #8d618b; font-size: 9.4px; }
.cells path { fill-opacity: .9; }
.cells .c1 { fill: #abd9e9; fill-opacity: .72; }
.c2 { fill: #5c96c6; }
.c3 { fill: #fffdc7; }
.c4 { fill: #ffb874; }
.c5 { fill: #dc4044; }
```
